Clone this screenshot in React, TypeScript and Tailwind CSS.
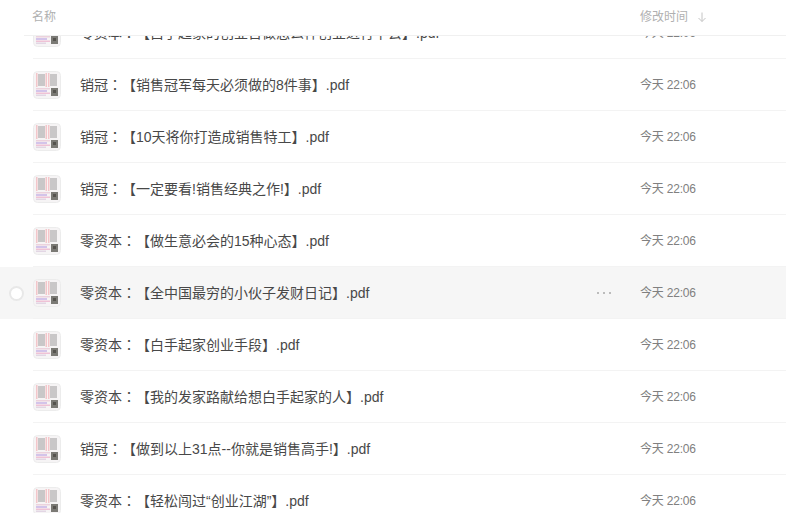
const FILES = [
  { prefix: "零资本", title: "【白手起家的创业日做怎么样创业进行下去】.pdf" },
  { prefix: "销冠", title: "【销售冠军每天必须做的8件事】.pdf" },
  { prefix: "销冠", title: "【10天将你打造成销售特工】.pdf" },
  { prefix: "销冠", title: "【一定要看!销售经典之作!】.pdf" },
  { prefix: "零资本", title: "【做生意必会的15种心态】.pdf" },
  { prefix: "零资本", title: "【全中国最穷的小伙子发财日记】.pdf", hover: true },
  { prefix: "零资本", title: "【白手起家创业手段】.pdf" },
  { prefix: "零资本", title: "【我的发家路献给想白手起家的人】.pdf" },
  { prefix: "销冠", title: "【做到以上31点--你就是销售高手!】.pdf" },
  { prefix: "零资本", title: "【轻松闯过“创业江湖”】.pdf" },
];

/* Tiny PDF preview: two faded pages on top, coloured text and a QR block below */
function Thumb() {
  return (
    <svg width="28" height="28" viewBox="0 0 28 28" className="shrink-0">
      <rect x="0.5" y="0.5" width="27" height="27" rx="4" fill="#f6f4f5" stroke="#ececec" />
      <g className="blur-[0.7px]">
        <rect x="3" y="2" width="1.5" height="14" fill="#f3c6ca" />
        <rect x="5" y="3" width="7" height="12" fill="#c9c7c8" />
        <rect x="12.5" y="2" width="1.5" height="14" fill="#f3c6ca" />
        <rect x="15" y="2" width="1.5" height="14" fill="#f3c6ca" />
        <rect x="17" y="3" width="7" height="12" fill="#c9c7c8" />
        <rect x="3" y="17" width="14" height="1.5" fill="#ecd2dd" />
        <rect x="3" y="19" width="11" height="2" fill="#d3c4ea" />
        <rect x="3" y="21.5" width="14" height="1.5" fill="#efc2d6" />
        <rect x="3" y="23.5" width="10" height="1.5" fill="#e2d6e4" />
        <rect x="18" y="17" width="7" height="8" fill="#7b7a75" />
        <rect x="20" y="19" width="3" height="3" fill="#55534e" />
      </g>
    </svg>
  );
}

function FileRow({ prefix, title, hover }: { prefix: string; title: string; hover?: boolean }) {
  return (
    <div className={`flex h-[52px] items-center ${hover ? "bg-[#f6f6f6]" : ""}`}>
      <div className="flex w-[33px] shrink-0 justify-end pr-[9px]">
        {hover && <span className="h-[15px] w-[15px] rounded-full border-2 border-[#e8e8e8] bg-white" />}
      </div>
      <div className="flex h-full min-w-0 flex-1 items-center border-b border-[#f3f3f3]">
        <Thumb />
        <span className="ml-[19px] flex-1 truncate text-sm text-[#484848] [text-spacing-trim:space-all]">
          {prefix}
          <span className="font-['Noto_Sans_CJK_TC',sans-serif]">：</span>
          {title}
        </span>
        {hover && (
          <div className="mr-[29px] flex gap-1">
            <span className="h-0.5 w-0.5 rounded-full bg-[#a8a8a8]" />
            <span className="h-0.5 w-0.5 rounded-full bg-[#a8a8a8]" />
            <span className="h-0.5 w-0.5 rounded-full bg-[#a8a8a8]" />
          </div>
        )}
        <span className="mr-[90px] w-[56px] whitespace-nowrap text-xs tracking-[-0.2px] text-[#808080]">今天 22:06</span>
      </div>
    </div>
  );
}

export default function App() {
  return (
    <div className="h-[513px] w-[786px] overflow-hidden bg-white font-['Liberation_Sans','Noto_Sans_CJK_SC',sans-serif]">
      <div className="ml-6 flex h-[36px] items-center justify-between border-b border-[#f0f0f0] pb-0.5 text-xs text-[#b0b0b0]">
        <span className="ml-2">名称</span>
        <div className="mr-[79px] flex items-center gap-[9px]">
          <span>修改时间</span>
          <svg width="10" height="10" viewBox="0 0 10 10" fill="none" stroke="#c4c4c4" strokeWidth="1">
            <path d="M5 0.5v9M1.5 6L5 9.5 8.5 6" />
          </svg>
        </div>
      </div>
      <div className="h-[477px] overflow-hidden">
        <div className="-mt-[29px]">
          {FILES.map((f) => (
            <FileRow key={f.title} prefix={f.prefix} title={f.title} hover={f.hover} />
          ))}
        </div>
      </div>
    </div>
  );
}
